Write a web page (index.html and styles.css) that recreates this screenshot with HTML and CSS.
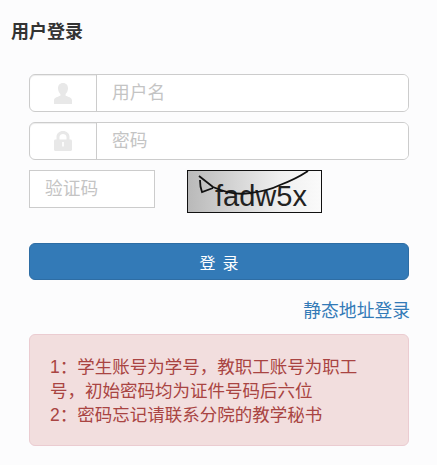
FILE: index.html
```html
<!DOCTYPE html>
<html lang="zh-CN">
<head>
<meta charset="utf-8">
<title>用户登录</title>
<link rel="stylesheet" href="styles.css">
</head>
<body>
<h1 class="title">用户登录</h1>
<form class="form">
  <div class="group">
    <span class="addon">
      <svg class="icon" viewBox="0 0 18 21" width="18" height="21"><path d="M9 0c3.300 0 5 2.300 5 5.200 0 2.500-1.200 4.800-2.400 5.900v1.700c2.400 1 6.400 1.700 6.400 4.700V21H0v-3.500c0-3 4-3.700 6.400-4.700v-1.700C5.200 10 4 7.700 4 5.200 4 2.300 5.700 0 9 0z" fill="#e8e8e8"/></svg>
    </span>
    <input class="field" type="text" placeholder="用户名">
  </div>
  <div class="group">
    <span class="addon">
      <svg class="icon" viewBox="0 0 18 20" width="18" height="20"><path d="M2.500 8.500V6C2.500 2.500 5.300 0 9 0s6.500 2.500 6.500 6v2.500h1C17.400 8.500 18 9.200 18 10v8.500c0 .9-.6 1.500-1.500 1.500h-15C.6 20 0 19.400 0 18.500V10c0-.8.6-1.500 1.500-1.500zm3 0h7V6c0-1.900-1.900-3-3.500-3S5.500 4.100 5.500 6zM8.200 11v4.500h1.600V11z" fill="#e8e8e8" fill-rule="evenodd"/></svg>
    </span>
    <input class="field" type="text" placeholder="密码">
  </div>
  <div class="captcha-row">
    <input class="field code" type="text" placeholder="验证码">
    <svg class="captcha" viewBox="0 0 133 41" width="135" height="43">
      <defs>
        <linearGradient id="cg" x1="0" x2="1" y1="0" y2="0">
          <stop offset="0" stop-color="#b9b9b9"/>
          <stop offset="0.7" stop-color="#f0f0f0"/>
          <stop offset="1" stop-color="#fafafa"/>
        </linearGradient>
      </defs>
      <rect width="133" height="41" fill="url(#cg)"/>
      <text x="27" y="34.800" class="captcha-text" textLength="92" lengthAdjust="spacingAndGlyphs">fadw5x</text>
      <path d="M12 9 Q12 16 14 21 L25 17 M11 5 L25 16 Q45 25 62 22 Q80 20 92 14 Q108 8 120 0" fill="none" stroke="#111" stroke-width="1.800"/>
    </svg>
  </div>
  <button class="btn" type="button">登 录</button>
  <div class="link-row"><a class="link" href="#">静态地址登录</a></div>
  <div class="alert">1：学生账号为学号，教职工账号为职工号，初始密码均为证件号码后六位<br>2：密码忘记请联系分院的教学秘书</div>
</form>
</body>
</html>
```
FILE: styles.css
```css
* { box-sizing: border-box; }
html, body { margin: 0; padding: 0; }
body {
  background: #fcfcfd;
  color: #333;
  font-family: "Liberation Sans", "Noto Sans CJK SC", sans-serif;
  height: 465px;
  overflow: hidden;
}
.title {
  margin: 0;
  padding: 22px 0 0 11px;
  font-size: 18px;
  line-height: 21px;
  font-weight: 700;
  color: #333;
}
.form {
  display: flex;
  flex-direction: column;
  width: 380px;
  margin: 31px 0 0 29px;
}
.group {
  display: flex;
  height: 38px;
  margin-bottom: 10px;
  border: 1px solid #ccc;
  border-radius: 6px;
  background: #fff;
  overflow: hidden;
  box-shadow: inset 0 1px 1px rgba(0, 0, 0, .075);
}
.addon {
  flex: none;
  width: 67px;
  display: flex;
  align-items: center;
  justify-content: center;
  border-right: 1px solid #ccc;
}
.icon { display: block; }
.field {
  border: 0;
  outline: 0;
  flex: 1;
  min-width: 0;
  padding: 0 15px;
  font: inherit;
  font-size: 17.7px;
  background: #fff;
  color: #333;
}
.field::placeholder { color: #c4c4c4; opacity: 1; }
.captcha-row {
  display: flex;
  align-items: flex-start;
  gap: 32px;
}
.code {
  flex: none;
  width: 126px;
  height: 38px;
  border: 1px solid #ccc;
}
.captcha {
  display: block;
  flex: none;
  border: 1px solid #111;
}
.captcha-text {
  font-family: "Liberation Sans", sans-serif;
  font-size: 29px;
  fill: #222;
}
.btn {
  margin-top: 30px;
  height: 37px;
  border: 1px solid #2e6da4;
  border-radius: 6px;
  background: #337ab7;
  color: #fff;
  font: inherit;
  font-size: 16px;
  word-spacing: 2.5px;
  padding: 0;
}
.link-row {
  display: flex;
  justify-content: flex-end;
  margin: 19px -1px 0 0;
  line-height: 25px;
}
.link {
  color: #337ab7;
  text-decoration: none;
  font-size: 17.8px;
}
.alert {
  margin-top: 10px;
  height: 112px;
  padding: 20px 35px 0 20px;
  border: 1px solid #ebccd1;
  border-radius: 6px;
  background: #f2dede;
  color: #a94442;
  font-size: 17.5px;
  line-height: 24px;
}
```
